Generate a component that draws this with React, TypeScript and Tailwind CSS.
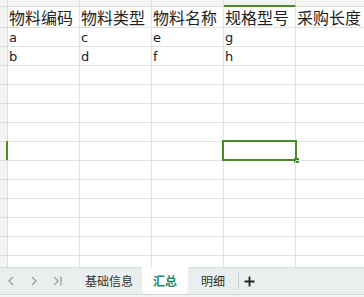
import React from "react";

const headers = ["物料编码", "物料类型", "物料名称", "规格型号", "采购长度"];
const data = [
  ["a", "c", "e", "g", ""],
  ["b", "d", "f", "h", ""],
];

export default function App() {
  const rows = Array.from({ length: 13 }, (_, i) => data[i] || ["", "", "", "", ""]);
  return (
    <div
      className="w-[364px] h-[297px] overflow-hidden bg-white flex flex-col"
      style={{ fontFamily: '"Noto Sans CJK SC", "Noto Sans", sans-serif' }}
    >
      <div className="h-[267px] overflow-hidden flex flex-col shrink-0">
        {/* column header strip */}
        <div className="flex h-[7px] shrink-0 bg-[#f4f4f4]">
          <div className="w-[8px] shrink-0 border-r border-[#dcdcdc] border-b" />
          {headers.map((_, i) => (
            <div
              key={i}
              className={
                "w-[72px] shrink-0 border-r border-[#dcdcdc] " +
                (i === 3 ? "border-b-2 border-b-[#4a8c2a]" : "border-b border-b-[#dcdcdc]")
              }
            />
          ))}
        </div>
        {/* header row */}
        <div className="flex h-[21px] shrink-0">
          <div className="w-[8px] shrink-0 bg-[#f4f4f4] border-r border-b border-[#dcdcdc]" />
          {headers.map((h, i) => (
            <div
              key={i}
              className="w-[72px] shrink-0 border-r border-b border-[#e2e2e2] pl-[1px] text-[16px] leading-[21px] text-[#222] whitespace-nowrap overflow-visible"
            >
              {h}
            </div>
          ))}
        </div>
        {rows.map((r, ri) => (
          <div key={ri} className="flex h-[19px] shrink-0">
            <div className="w-[8px] shrink-0 bg-[#f4f4f4] border-r border-b border-[#dcdcdc] relative">
              {ri === 6 && <div className="absolute left-[6px] top-[-1px] w-[2px] h-[19px] bg-[#4a8c2a]" />}
            </div>
            {r.map((c, ci) => (
              <div
                key={ci}
                className="w-[72px] shrink-0 border-r border-b border-[#e2e2e2] pl-[1px] pt-[2px] text-[13px] leading-[16px] text-[#222] relative"
                style={{ fontFamily: '"DejaVu Sans", sans-serif' }}
              >
                {c}
                {ri === 6 && ci === 3 && (
                  <div className="absolute left-[-2px] top-[-2px] w-[75px] h-[21px] border-2 border-[#4a8c2a]">
                    <div className="absolute right-[-4px] bottom-[-4px] w-[5px] h-[5px] bg-[#4a8c2a]" />
                  </div>
                )}
              </div>
            ))}
          </div>
        ))}
      </div>
      {/* sheet tab bar */}
      <div className="h-[27px] shrink-0 bg-[#e8efee] border-t border-[#d6dcdc] flex items-stretch text-[12px] text-[#333]">
        <div className="flex items-center pl-[6px] gap-[13px] w-[76px]">
          <svg width="10" height="12" viewBox="0 0 10 12" fill="none" stroke="#a0a8a8" strokeWidth="1.5">
            <path d="M7 2 L3 6 L7 10" />
          </svg>
          <svg width="10" height="12" viewBox="0 0 10 12" fill="none" stroke="#a0a8a8" strokeWidth="1.5">
            <path d="M3 2 L7 6 L3 10" />
          </svg>
          <svg width="12" height="12" viewBox="0 0 12 12" fill="none" stroke="#a0a8a8" strokeWidth="1.5">
            <path d="M2 2 L6 6 L2 10" />
            <path d="M9 1.5 L9 10.5" />
          </svg>
        </div>
        <div className="w-[66px] flex items-center justify-center">基础信息</div>
        <div className="w-[46px] -mt-[1px] bg-white rounded-b-[5px] flex items-center justify-center text-[#1b8a6b] font-bold">
          汇总
        </div>
        <div className="w-[50px] flex items-center justify-center">明细</div>
        <div className="w-px bg-[#c8cfcf] my-[5px]" />
        <div className="w-[20px] flex items-center justify-center">
          <svg width="11" height="11" viewBox="0 0 11 11" stroke="#222" strokeWidth="1.8">
            <path d="M5.5 0.5 V10.5 M0.5 5.5 H10.5" />
          </svg>
        </div>
      </div>
      <div className="flex-1 bg-[#f2f4f4] border-t border-[#cfd6d6]" />
    </div>
  );
}
